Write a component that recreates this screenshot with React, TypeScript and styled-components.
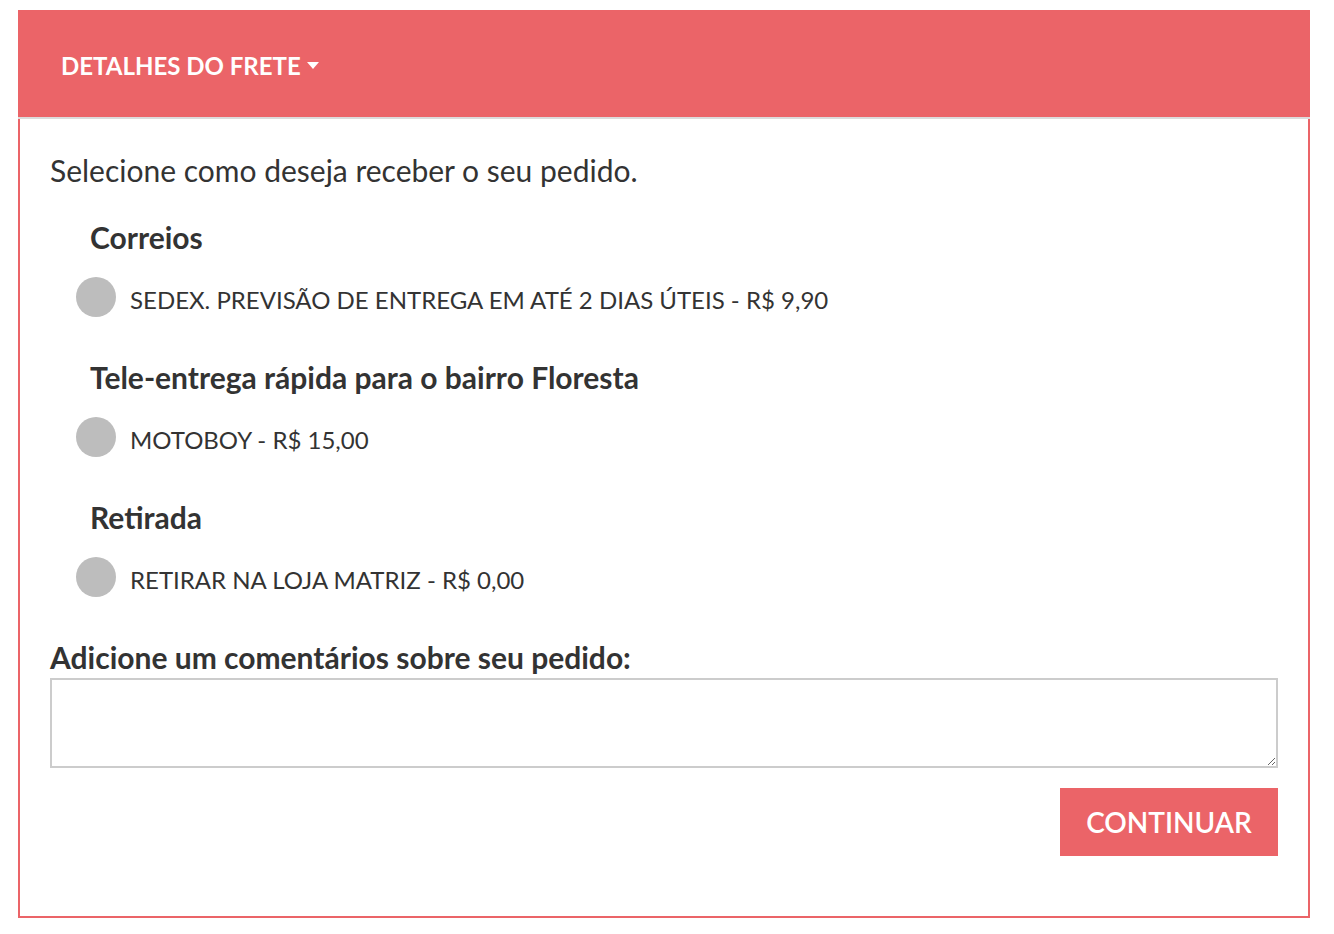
import React, {useState} from 'react';
import styled, {createGlobalStyle} from 'styled-components';

const RED = '#eb6468';

const GlobalStyle = createGlobalStyle`
  body {
    margin: 0;
    background: #ffffff;
    font-family: Lato, "Open Sans", sans-serif;
    color: #333333;
  }
`;

type Option = {id: string; label: string};
type Group = {title: string; options: Option[]};

const groups: Group[] = [
    {title: 'Correios', options: [{id: 'sedex', label: 'SEDEX. PREVISÃO DE ENTREGA EM ATÉ 2 DIAS ÚTEIS - R$ 9,90'}]},
    {title: 'Tele-entrega rápida para o bairro Floresta', options: [{id: 'motoboy', label: 'MOTOBOY - R$ 15,00'}]},
    {title: 'Retirada', options: [{id: 'retirar', label: 'RETIRAR NA LOJA MATRIZ - R$ 0,00'}]},
];

const App = () => {
    const [selected, setSelected] = useState<string>('');
    const [comment, setComment] = useState('');

    return (
        <Page>
            <GlobalStyle/>
            <Panel>
                <Header>
                    <HeaderTitle>
                        DETALHES DO FRETE
                        <Caret/>
                    </HeaderTitle>
                </Header>
                <Body>
                    <Intro>Selecione como deseja receber o seu pedido.</Intro>
                    {groups.map(g => (
                        <GroupBlock key={g.title}>
                            <GroupTitle>{g.title}</GroupTitle>
                            {g.options.map(o => (
                                <OptionRow key={o.id} onClick={() => setSelected(o.id)}>
                                    <Radio $checked={selected === o.id}/>
                                    <OptionLabel>{o.label}</OptionLabel>
                                </OptionRow>
                            ))}
                        </GroupBlock>
                    ))}
                    <CommentLabel>Adicione um comentários sobre seu pedido:</CommentLabel>
                    <Comment value={comment} onChange={e => setComment(e.target.value)}/>
                    <Actions>
                        <ContinueButton>CONTINUAR</ContinueButton>
                    </Actions>
                </Body>
            </Panel>
        </Page>
    );
};

export default App;

const Page = styled.div`
  padding: 10px 24px 16px 18px;
`;

const Panel = styled.div`
  width: 1292px;
  box-sizing: border-box;
  border: 2px solid ${RED};
  border-top: none;
`;

const Header = styled.div`
  background: ${RED};
  height: 109px;
  margin: 0 -2px;
  border-bottom: 2px solid #dcdcdc;
  display: flex;
  align-items: center;
  padding-left: 43px;
  padding-top: 3px;
  box-sizing: border-box;
`;

const HeaderTitle = styled.div`
  color: #ffffff;
  font-size: 24px;
  font-weight: 700;
  display: flex;
  align-items: center;
  gap: 6px;
`;

const Caret = styled.span`
  width: 0;
  height: 0;
  border-left: 6px solid transparent;
  border-right: 6px solid transparent;
  border-top: 7px solid #ffffff;
`;

const Body = styled.div`
  padding: 33px 30px 60px 30px;
`;

const Intro = styled.div`
  font-size: 30px;
  line-height: 36px;
  margin-bottom: 31px;
`;

const GroupBlock = styled.div`
  padding-left: 26px;
  margin-bottom: 42px;

  &:last-of-type {
    margin-bottom: 0;
  }
`;

const GroupTitle = styled.div`
  font-size: 30px;
  font-weight: 700;
  line-height: 36px;
  padding-left: 14px;
  margin-bottom: 22px;
`;

const OptionRow = styled.label`
  display: flex;
  align-items: center;
  gap: 14px;
  height: 40px;
  cursor: pointer;
`;

const Radio = styled.span<{ $checked: boolean }>`
  width: 40px;
  height: 40px;
  border-radius: 50%;
  background: ${p => p.$checked ? RED : '#bdbdbd'};
  flex-shrink: 0;
`;

const OptionLabel = styled.span`
  font-size: 24px;
  color: #333333;
  padding-top: 5px;
`;

const CommentLabel = styled.div`
  font-size: 30px;
  font-weight: 700;
  line-height: 36px;
  margin-top: 42px;
`;

const Comment = styled.textarea`
  display: block;
  width: 100%;
  height: 90px;
  box-sizing: border-box;
  border: 2px solid #cccccc;
  margin-top: 3px;
  font-family: Lato, sans-serif;
  font-size: 20px;
  resize: vertical;
  outline: none;
`;

const Actions = styled.div`
  display: flex;
  justify-content: flex-end;
  margin-top: 20px;
`;

const ContinueButton = styled.button`
  background: ${RED};
  color: #ffffff;
  border: none;
  width: 218px;
  height: 68px;
  font-family: Lato, sans-serif;
  font-size: 28px;
  font-weight: 600;
  cursor: pointer;
`;
